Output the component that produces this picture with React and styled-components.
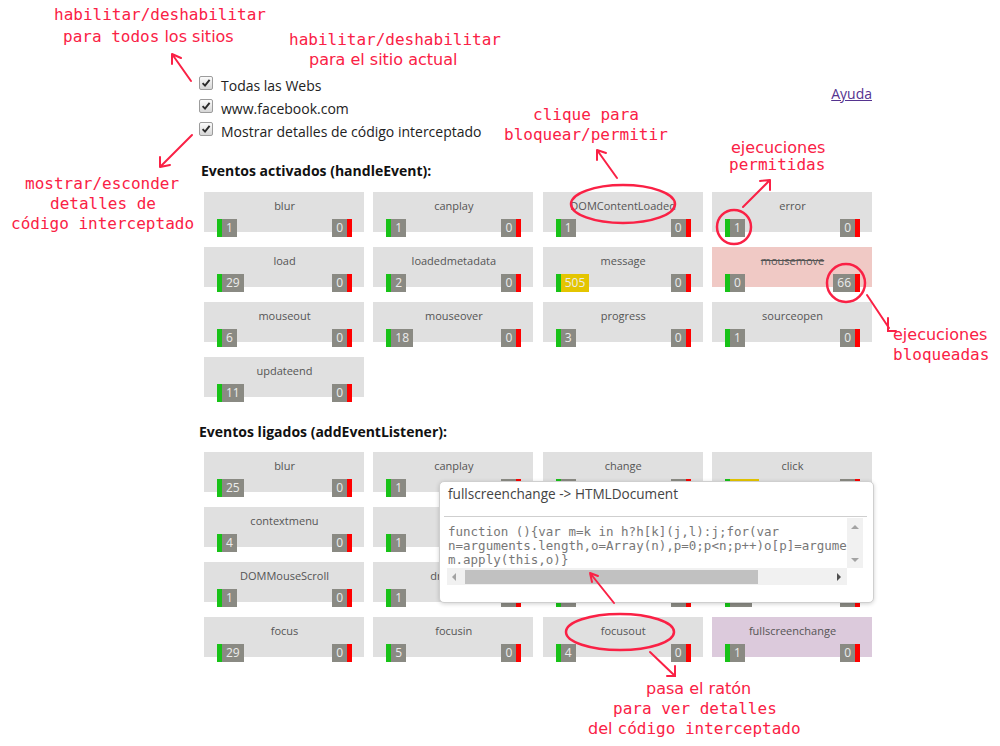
import React from 'react';
import styled, { createGlobalStyle } from 'styled-components';

const GlobalStyle = createGlobalStyle`
  html, body { margin: 0; padding: 0; background: #fff; }
  body { font-family: "Open Sans", "Liberation Sans", sans-serif; }
`;

const Page = styled.div`
  position: relative;
  width: 1000px;
  height: 746px;
  overflow: hidden;
  box-sizing: border-box;
  padding: 74px 0 0 199px;
`;

const Main = styled.div`
  width: 673px;
`;

const TopRow = styled.div`
  display: flex;
  justify-content: space-between;
  align-items: flex-start;
`;

const Options = styled.div`
  display: flex;
  flex-direction: column;
`;

const Option = styled.label`
  display: flex;
  align-items: center;
  gap: 8px;
  height: 23px;
  font-size: 14px;
  color: #222;
`;

const Check = styled.span`
  width: 14px;
  height: 14px;
  box-sizing: border-box;
  border: 1px solid #9c9c9c;
  border-radius: 2px;
  background: linear-gradient(#fbfbfb, #d6d6d6);
  display: inline-flex;
  align-items: center;
  justify-content: center;
  margin-bottom: 5px;
`;

const HelpLink = styled.a`
  margin-top: 10px;
  font-size: 14px;
  line-height: 20px;
  color: #55338f;
  text-decoration: underline;
`;

const Heading = styled.h2`
  margin: ${p => (p.$first ? '18px' : '25px')} 0 ${p => (p.$first ? '11px' : '10px')} ${p => (p.$first ? '2px' : '0')};
  font-size: 14px;
  line-height: 20px;
  font-weight: 700;
  color: #111;
`;

const Section = styled.div`
  position: relative;
`;

const Grid = styled.div`
  margin-left: 5px;
  width: 668px;
  display: grid;
  grid-template-columns: repeat(4, 1fr);
  column-gap: 9.33px;
  row-gap: 15px;
`;

const tones = {
  normal: '#e0e0e0',
  blocked: '#f0c9c5',
  hover: '#dccadc',
};

const Card = styled.div`
  height: 40px;
  box-sizing: border-box;
  padding: 6px 12px 0 13px;
  background: ${p => tones[p.$tone]};
  display: flex;
  flex-direction: column;
  cursor: pointer;
`;

const Label = styled.div`
  text-align: center;
  font-size: 11px;
  line-height: 16px;
  color: #555;
  text-decoration: ${p => (p.$struck ? 'line-through' : 'none')};
`;

const Counts = styled.div`
  display: flex;
  justify-content: space-between;
  margin-top: 5px;
`;

const Count = styled.span`
  height: 18px;
  line-height: 18px;
  padding: 0 4px;
  font-size: 12px;
  color: #ececec;
  background: ${p => (p.$hot ? '#e4c500' : '#8a8a83')};
  border-left: ${p => (p.$side === 'allow' ? '5px solid #18c218' : '0')};
  border-right: ${p => (p.$side === 'block' ? '5px solid #ff0000' : '0')};
`;

const Tooltip = styled.div`
  position: absolute;
  left: 240px;
  top: 29px;
  width: 435px;
  height: 122px;
  box-sizing: border-box;
  background: #fff;
  border: 1px solid #cfcfcf;
  border-radius: 5px;
  box-shadow: 0 1px 4px rgba(0, 0, 0, 0.18);
  z-index: 1;
`;

const TipTitle = styled.div`
  padding: 4px 8px 0;
  font-size: 13.6px;
  line-height: 16px;
  color: #444;
`;

const TipRule = styled.div`
  margin: 14px 6px 0 4px;
  border-top: 1px solid #cfcfcf;
`;

const CodeBox = styled.div`
  margin: 1px 10px 0 7px;
  display: grid;
  grid-template-columns: 1fr 16px;
  grid-template-rows: 50px 17px;
`;

const Code = styled.pre`
  margin: 0;
  padding: 7px 0 0 1px;
  overflow: hidden;
  font-family: "DejaVu Sans Mono", monospace;
  font-size: 12.5px;
  line-height: 14px;
  color: #777;
`;

const VScroll = styled.div`
  background: #f1f1f1;
  display: flex;
  flex-direction: column;
  justify-content: space-between;
  align-items: center;
  padding: 7px 0 6px;
`;

const HScroll = styled.div`
  background: #f1f1f1;
  display: flex;
  align-items: center;
  padding: 0 6px 0 5px;
`;

const Thumb = styled.div`
  margin-left: 9px;
  width: 293px;
  height: 14px;
  background: #c1c1c1;
`;

const Spacer = styled.div`
  flex: 1;
`;

const Corner = styled.div`
  background: #fff;
`;

const Arrow = styled.span`
  width: 0;
  height: 0;
  border-style: solid;
  ${p => {
    const c = p.$dark ? '#505050' : '#a3a3a3';
    switch (p.$dir) {
      case 'left':
        return `border-width: 4px 4px 4px 0; border-color: transparent ${c} transparent transparent;`;
      case 'right':
        return `border-width: 4px 0 4px 4px; border-color: transparent transparent transparent ${c};`;
      case 'up':
        return `border-width: 0 4px 4px 4px; border-color: transparent transparent ${c} transparent;`;
      default:
        return `border-width: 4px 4px 0 4px; border-color: ${c} transparent transparent transparent;`;
    }
  }}
`;

const Overlay = styled.svg`
  position: absolute;
  left: 0;
  top: 0;
  width: 1000px;
  height: 746px;
  pointer-events: none;
  z-index: 3;
`;

const Note = styled.div`
  position: absolute;
  left: ${p => p.$x}px;
  top: ${p => p.$y - 10}px;
  line-height: 20px;
  font-size: 16px;
  white-space: pre;
  color: #fa2145;
  font-family: ${p => (p.$sans ? '"DejaVu Sans", sans-serif' : '"DejaVu Sans Mono", monospace')};
  z-index: 4;
`;

const Sans = styled.span`
  font-family: "DejaVu Sans", sans-serif;
`;

const active = [
  { name: 'blur', ok: 1, no: 0 },
  { name: 'canplay', ok: 1, no: 0 },
  { name: 'DOMContentLoaded', ok: 1, no: 0 },
  { name: 'error', ok: 1, no: 0 },
  { name: 'load', ok: 29, no: 0 },
  { name: 'loadedmetadata', ok: 2, no: 0 },
  { name: 'message', ok: 505, no: 0 },
  { name: 'mousemove', ok: 0, no: 66, tone: 'blocked' },
  { name: 'mouseout', ok: 6, no: 0 },
  { name: 'mouseover', ok: 18, no: 0 },
  { name: 'progress', ok: 3, no: 0 },
  { name: 'sourceopen', ok: 1, no: 0 },
  { name: 'updateend', ok: 11, no: 0 },
];

const bound = [
  { name: 'blur', ok: 25, no: 0 },
  { name: 'canplay', ok: 1, no: 0 },
  { name: 'change', ok: 1, no: 0 },
  { name: 'click', ok: 142, no: 0 },
  { name: 'contextmenu', ok: 4, no: 0 },
  { name: 'copy', ok: 1, no: 0 },
  { name: 'cut', ok: 1, no: 0 },
  { name: 'dblclick', ok: 3, no: 0 },
  { name: 'DOMMouseScroll', ok: 1, no: 0 },
  { name: 'dragstart', ok: 1, no: 0 },
  { name: 'error', ok: 1, no: 0 },
  { name: 'fetch', ok: 12, no: 0 },
  { name: 'focus', ok: 29, no: 0 },
  { name: 'focusin', ok: 5, no: 0 },
  { name: 'focusout', ok: 4, no: 0 },
  { name: 'fullscreenchange', ok: 1, no: 0, tone: 'hover' },
];

function EventCard({ ev }) {
  const tone = ev.tone || 'normal';
  return (
    <Card $tone={tone}>
      <Label $struck={tone === 'blocked'}>{ev.name}</Label>
      <Counts>
        <Count $side="allow" $hot={ev.ok >= 100}>{ev.ok}</Count>
        <Count $side="block">{ev.no}</Count>
      </Counts>
    </Card>
  );
}

function Tick() {
  return (
    <svg width="10" height="10" viewBox="0 0 10 10">
      <path d="M1.6 5.2 L4 7.6 L8.6 1.8" fill="none" stroke="#2b2b2b" strokeWidth="1.9" />
    </svg>
  );
}

const red = '#fa2145';

export default function App() {
  return (
    <>
      <GlobalStyle />
      <Page>
        <Main>
          <TopRow>
            <Options>
              <Option><Check><Tick /></Check>Todas las Webs</Option>
              <Option><Check><Tick /></Check>www.facebook.com</Option>
              <Option><Check><Tick /></Check>Mostrar detalles de código interceptado</Option>
            </Options>
            <HelpLink href="#">Ayuda</HelpLink>
          </TopRow>

          <Heading $first>Eventos activados (handleEvent):</Heading>
          <Section>
            <Grid>
              {active.map(ev => <EventCard key={ev.name} ev={ev} />)}
            </Grid>
          </Section>

          <Heading>Eventos ligados (addEventListener):</Heading>
          <Section>
            <Grid>
              {bound.map(ev => <EventCard key={ev.name} ev={ev} />)}
            </Grid>
            <Tooltip>
              <TipTitle>fullscreenchange -&gt; HTMLDocument</TipTitle>
              <TipRule />
              <CodeBox>
                <Code>{'function (){var m=k in h?h[k](j,l):j;for(var\nn=arguments.length,o=Array(n),p=0;p<n;p++)o[p]=arguments[p];return\nm.apply(this,o)}'}</Code>
                <VScroll>
                  <Arrow $dir="up" />
                  <Arrow $dir="down" />
                </VScroll>
                <HScroll>
                  <Arrow $dir="left" />
                  <Thumb />
                  <Spacer />
                  <Arrow $dir="right" $dark />
                </HScroll>
                <Corner />
              </CodeBox>
            </Tooltip>
          </Section>
        </Main>

        <Overlay viewBox="0 0 1000 746">
          <g fill="none" stroke={red} strokeWidth="2" strokeLinecap="round">
            <path d="M191 81 L172 54 M172 54 L172 64 M172 54 L181 58" />
            <path d="M192 135 L160 167 M160 167 L160 157 M160 167 L170 165" />
            <path d="M617 178 L597 150 M597 150 L597 160 M597 150 L606 153" />
            <path d="M743 207 L770 180 M770 180 L760 181 M770 180 L770 190" />
            <path d="M867 295 L889 328 M888 318 L888 331 L896 331" />
            <path d="M650 652 L674 675 M675 666 L675 676 L667 676" />
            <path d="M614 603 L590 573 M590 573 L598 576 M590 573 L592 582" />
            <ellipse cx="623" cy="204" rx="52" ry="19" strokeWidth="2.5" />
            <circle cx="734" cy="227" r="17" strokeWidth="2.5" />
            <circle cx="846" cy="283" r="19" strokeWidth="2.5" />
            <ellipse cx="620" cy="632" rx="54" ry="18" strokeWidth="2.5" />
          </g>
        </Overlay>

        <Note $x={54} $y={15}>habilitar/deshabilitar</Note>
        <Note $x={63} $y={37}>para todos<Sans> los sitios</Sans></Note>
        <Note $x={289} $y={40}>habilitar/deshabilitar</Note>
        <Note $x={309} $y={60} $sans>para el sitio actual</Note>
        <Note $x={25} $y={184}>mostrar/esconder</Note>
        <Note $x={50} $y={204}>detalles de</Note>
        <Note $x={11} $y={224}>código interceptado</Note>
        <Note $x={533} $y={115}>clique para</Note>
        <Note $x={504} $y={135}>bloquear/permitir</Note>
        <Note $x={731} $y={148} $sans>ejecuciones</Note>
        <Note $x={729} $y={165}>permitidas</Note>
        <Note $x={893} $y={335} $sans>ejecuciones</Note>
        <Note $x={893} $y={355}>bloqueadas</Note>
        <Note $x={646} $y={689} $sans>pasa el ratón</Note>
        <Note $x={613} $y={709}>para ver detalles</Note>
        <Note $x={588} $y={729}><Sans>del </Sans>código interceptado</Note>
      </Page>
    </>
  );
}
